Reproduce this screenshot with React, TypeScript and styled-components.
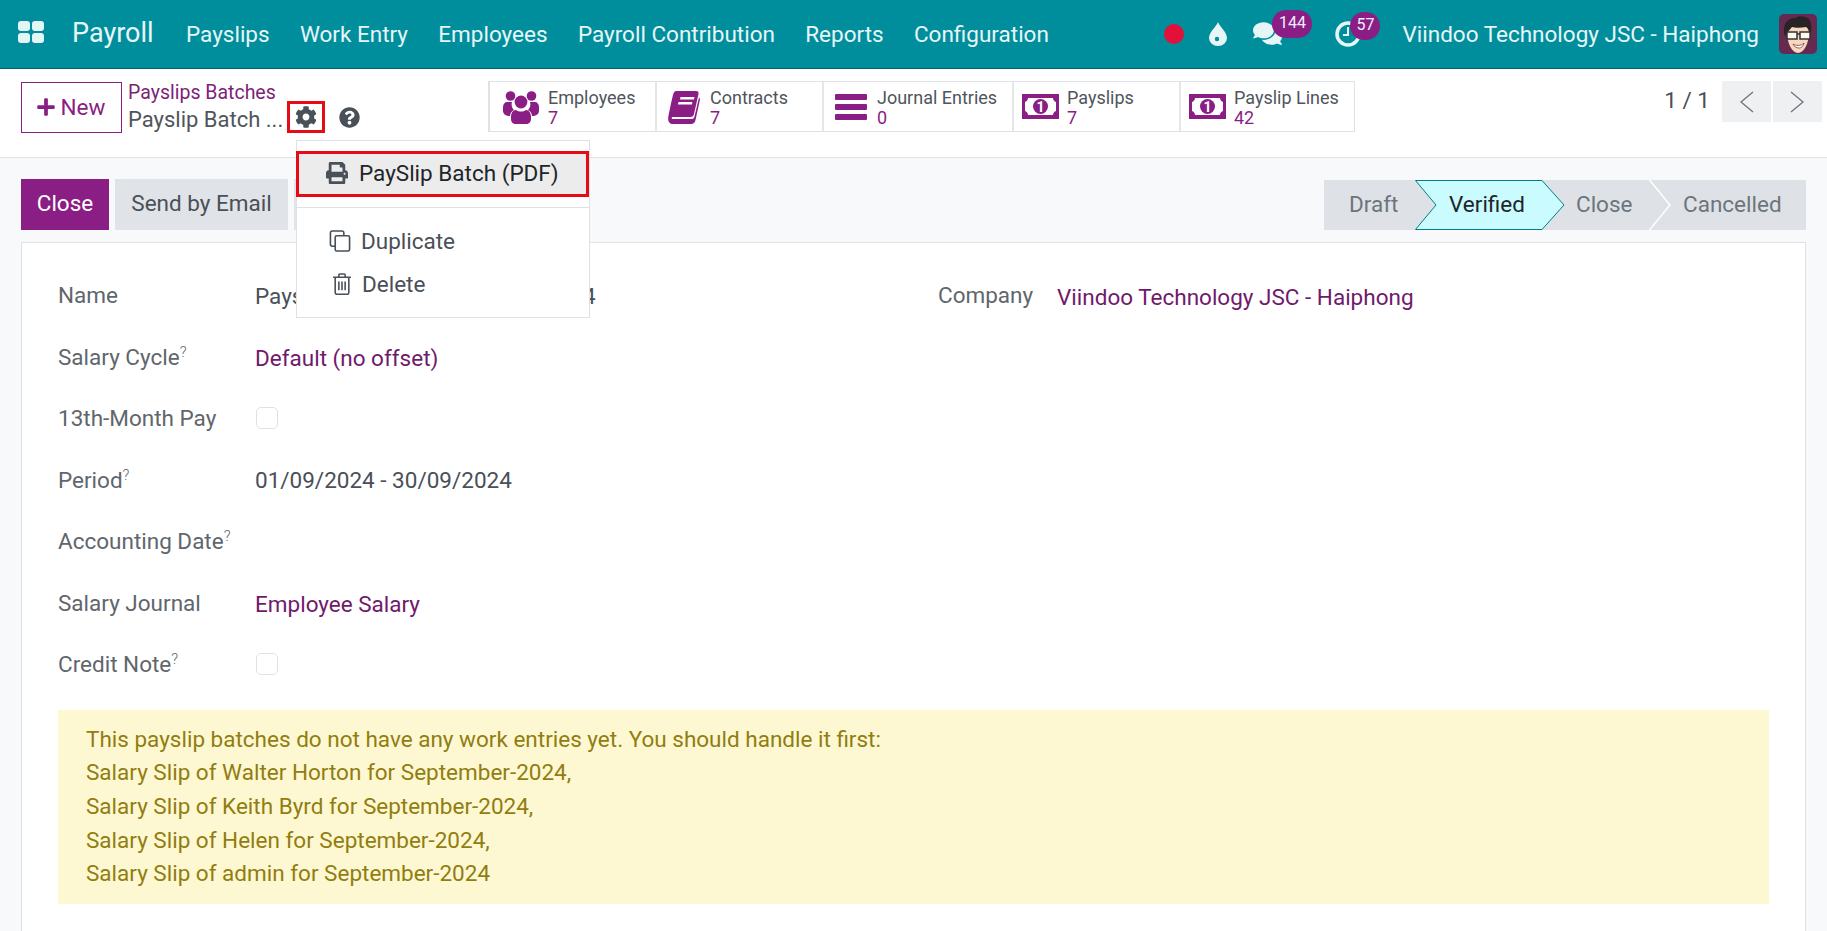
import React from "react";
import styled, { createGlobalStyle } from "styled-components";
import { FaCog, FaPlus, FaPrint, FaQuestionCircle, FaComments } from "react-icons/fa";

const GlobalStyle = createGlobalStyle`
  html, body {
    margin: 0;
    padding: 0;
    height: 100%;
    background: #f8f9fa;
    overflow: hidden;
  }
  body {
    font-family: Roboto, "Liberation Sans", sans-serif;
    font-size: 22.5px;
    color: #495057;
  }
`;

const purple = "#8a1e85";
const linkPurple = "#6f1a6b";

const Page = styled.div`
  width: 1827px;
  height: 931px;
  display: flex;
  flex-flow: column;
  overflow: hidden;
`;

/* top bar */
const NavBar = styled.header`
  height: 68px;
  flex: none;
  display: flex;
  align-items: center;
  background: #018e9c;
  border-bottom: 1px solid #05606a;
  color: #e6f6f7;
  padding: 0 10px 0 18px;
`;

const AppsGrid = styled.div`
  width: 26px;
  height: 21px;
  margin-top: -5px;
  display: grid;
  grid-template-columns: 12px 12px;
  grid-template-rows: 10px 10px;
  gap: 2px;
  span {
    background: #e4f5f6;
    border-radius: 3px;
  }
`;

const Brand = styled.div`
  font-size: 27px;
  margin-left: 28px;
  margin-right: 32px;
  margin-top: -2px;
  width: 82px;
`;

const NavMenu = styled.nav`
  display: flex;
  gap: 30.3px;
  margin-top: -1px;
`;

const NavRight = styled.div`
  margin-left: auto;
  display: flex;
  align-items: center;
  margin-top: -1px;
`;

const RecordDot = styled.span`
  width: 20px;
  height: 20px;
  border-radius: 50%;
  background: #e2113a;
  margin-right: 25px;
`;

const NavIcon = styled.span<{ $gap: number }>`
  position: relative;
  display: flex;
  margin-right: ${(p) => p.$gap}px;
`;

const Badge = styled.span<{ $left: number; $width: number }>`
  position: absolute;
  top: -9px;
  left: ${(p) => p.$left}px;
  width: ${(p) => p.$width}px;
  height: 28px;
  border-radius: 14px;
  background: ${purple};
  color: #eef;
  font-size: 16px;
  line-height: 25px;
  text-align: center;
`;

const CompanyName = styled.span`
  margin-right: 20px;
  white-space: nowrap;
`;

/* control panel */
const ControlPanel = styled.div`
  height: 89px;
  flex: none;
  box-sizing: border-box;
  display: flex;
  align-items: flex-start;
  background: #fff;
  border-bottom: 1px solid #dee2e6;
  padding: 12px 5px 0 21px;
`;

const PanelLeft = styled.div`
  width: 467px;
  flex: none;
  display: flex;
  gap: 6px;
`;

const NewButton = styled.button`
  width: 101px;
  height: 51px;
  margin-top: 1px;
  box-sizing: border-box;
  border: 1px solid ${purple};
  background: #fff;
  color: ${purple};
  font: inherit;
  display: flex;
  align-items: center;
  justify-content: center;
  gap: 5px;
  padding: 0 2px 2px 0;
  svg {
    width: 20px;
    height: 20px;
  }
`;

const Breadcrumbs = styled.div`
  display: flex;
  flex-flow: column;
`;

const CrumbLink = styled.a`
  color: #7d1f79;
  font-size: 19.5px;
  line-height: 22px;
  padding-top: 1px;
`;

const TitleRow = styled.div`
  height: 32px;
  margin-top: -3px;
  display: flex;
  align-items: center;
  color: #4f555b;
`;

const Title = styled.span`
  font-size: 22px;
  width: 159px;
  margin-top: 5px;
  white-space: nowrap;
`;

const GearCell = styled.div`
  position: relative;
  width: 38px;
  height: 32px;
  box-sizing: border-box;
  border: 3px solid #e60b14;
  display: flex;
  align-items: center;
  justify-content: center;
  svg {
    width: 22px;
    height: 22px;
    color: #495057;
  }
`;

const HelpIcon = styled(FaQuestionCircle)`
  width: 21px;
  height: 21px;
  margin-left: 14px;
  color: #495057;
`;

const ActionMenu = styled.div`
  position: absolute;
  z-index: 5;
  top: 36px;
  left: 6px;
  width: 294px;
  height: 178px;
  box-sizing: border-box;
  background: #fff;
  border: 1px solid #dee2e6;
  padding-top: 10px;
`;

const PrintItem = styled.div`
  height: 46px;
  margin: 0 0 0 -1px;
  box-sizing: border-box;
  border: 3px solid #e60b14;
  background: #ececec;
  color: #212529;
  display: flex;
  align-items: center;
  padding: 0 0 2px 27px;
  gap: 11px;
  white-space: nowrap;
  svg {
    width: 22px;
    height: 22px;
  }
`;

const MenuDivider = styled.hr`
  margin: 10px 0 11px;
  border: 0;
  border-top: 1px solid #dee2e6;
`;

const MenuItem = styled.div<{ $pad: number; $gap: number }>`
  height: 43px;
  display: flex;
  align-items: center;
  padding-left: ${(p) => p.$pad}px;
  gap: ${(p) => p.$gap}px;
  color: #495057;
`;

const StatButtons = styled.div`
  display: flex;
  height: 51px;
  box-sizing: border-box;
  border: 1px solid #dee2e6;
  border-left-width: 2px;
`;

const StatButton = styled.div<{ $width: number }>`
  width: ${(p) => p.$width}px;
  box-sizing: border-box;
  display: flex;
  align-items: center;
  border-right: 2px solid #e4e7ea;
  &:last-child {
    border-right: 0;
  }
`;

const StatIcon = styled.div<{ $width: number; $pad?: number }>`
  width: ${(p) => p.$width}px;
  box-sizing: border-box;
  padding-left: ${(p) => p.$pad || 0}px;
  flex: none;
  display: flex;
  justify-content: center;
  color: ${purple};
`;

const StatText = styled.div`
  display: flex;
  flex-flow: column;
  font-size: 18px;
  line-height: 20px;
  padding-top: 2px;
  color: #4f555b;
  white-space: nowrap;
  b {
    font-weight: 400;
    color: ${purple};
  }
`;

const Pager = styled.div`
  margin-left: auto;
  display: flex;
  align-items: flex-start;
  gap: 2px;
`;

const PagerCount = styled.span`
  line-height: 38px;
  margin-right: 10px;
`;

const PagerButton = styled.button`
  width: 49px;
  height: 41px;
  border: 0;
  padding: 0;
  background: #eff0f2;
  color: #6c757d;
  display: flex;
  align-items: center;
  justify-content: center;
`;

/* content */
const Content = styled.main`
  flex: 1;
  padding: 21px 21px 0;
  min-height: 0;
  display: flex;
  flex-flow: column;
`;

const StatusRow = styled.div`
  height: 51px;
  flex: none;
  display: flex;
  justify-content: space-between;
  margin-bottom: 12px;
`;

const Actions = styled.div`
  display: flex;
  gap: 6px;
`;

const ActionButton = styled.button<{ $primary?: boolean; $width: number }>`
  width: ${(p) => p.$width}px;
  border: 0;
  padding: 0 0 4px;
  font: inherit;
  background: ${(p) => (p.$primary ? purple : "#e0e3e8")};
  color: ${(p) => (p.$primary ? "#fff" : "#495057")};
`;

const StatusBar = styled.div`
  display: flex;
  height: 50px;
  margin-top: 1px;
  background: #dee2e6;
`;

const Stage = styled.div<{ $width: number; $pad: number; $active?: boolean }>`
  position: relative;
  width: ${(p) => p.$width}px;
  padding-left: ${(p) => p.$pad}px;
  box-sizing: border-box;
  line-height: 48px;
  white-space: nowrap;
  color: ${(p) => (p.$active ? "#212529" : "#6c757d")};
  svg {
    position: absolute;
    top: 0;
    left: 0;
  }
  span {
    position: relative;
  }
`;

const Sheet = styled.section`
  flex: 1;
  background: #fff;
  border: 1px solid #dee2e6;
  border-bottom: 0;
  padding: 21.5px 36px 0 36px;
`;

const FormGrid = styled.div`
  display: grid;
  grid-template-columns: 880px 1fr;
  margin-bottom: 14.5px;
`;

const FormColumn = styled.div`
  display: flex;
  flex-flow: column;
`;

const FormRow = styled.div<{ $labelWidth: number }>`
  height: 61.5px;
  display: grid;
  grid-template-columns: ${(p) => p.$labelWidth}px 1fr;
  align-items: center;
  white-space: nowrap;
`;

const Label = styled.label`
  color: #60666c;
  sup {
    font-size: 15px;
    font-weight: 300;
    line-height: 0;
  }
`;

const Value = styled.span<{ $link?: boolean }>`
  color: ${(p) => (p.$link ? linkPurple : "#495057")};
  padding-top: ${(p) => (p.$link ? 3 : 1)}px;
`;

const CheckBox = styled.span`
  display: block;
  width: 22px;
  height: 22px;
  margin-left: 1px;
  box-sizing: border-box;
  border: 1px solid #dee2e6;
  border-radius: 5px;
  background: #fff;
`;

const WarningBox = styled.div`
  background: #fdf8d2;
  color: #917d10;
  line-height: 33.7px;
  padding: 13px 28px 13px;
`;

const Users = () => (
  <svg width="38" height="34" viewBox="0 0 36 34" fill="currentColor">
    <circle cx="7.5" cy="6" r="4.8" />
    <circle cx="28.5" cy="6" r="4.8" />
    <path d="M0 17c0-3 2-5 4-5h5c-1 3 0 6 2 8-2 1-4 3-4 6-4 0-7-2-7-5z" />
    <path d="M36 17c0-3-2-5-4-5h-5c1 3 0 6-2 8 2 1 4 3 4 6 4 0 7-2 7-5z" />
    <circle cx="18" cy="12" r="6.4" />
    <path d="M13 20c3 2 7 2 10 0 3 0 5 3 5 7v2c0 3-2 5-5 5H13c-3 0-5-2-5-5v-2c0-4 2-7 5-7z" />
  </svg>
);

const Book = () => (
  <svg width="32" height="34" viewBox="0 0 32 34" fill="currentColor">
    <path d="M8 1h20c2 0 3 1 2.500 3L26 24c-.5 2-1.500 3-4 3H5c-1.500 0-2 2 0 2h19c1.500 0 2-1 2.500-2.500L31 7.500c1 .5 1 1.500.8 3L27.500 30c-.5 2.500-2 4-4.500 4H5c-3 0-5-2-4.800-5.500C.3 26 5 4 5.500 3.500 6 2 7 1 8 1z" />
    <rect x="11" y="7" width="14" height="2.500" rx=".5" fill="#fff" transform="skewX(-12) translate(3 0)" />
    <rect x="10" y="12" width="14" height="2.500" rx=".5" fill="#fff" transform="skewX(-12) translate(3 0)" />
  </svg>
);

const Bars = () => (
  <svg width="32" height="26" viewBox="0 0 32 26" fill="currentColor">
    <rect x="0" y="0" width="32" height="6" rx="1" />
    <rect x="0" y="10" width="32" height="6" rx="1" />
    <rect x="0" y="20" width="32" height="6" rx="1" />
  </svg>
);

const Money = () => (
  <svg width="37" height="25" viewBox="0 0 37 25" fill="currentColor">
    <path
      fillRule="evenodd"
      d="M0 0h37v25H0zM6 4c0 2-1.500 3.500-3 4v9c1.500.5 3 2 3 4h25c0-2 1.500-3.500 3-4V8c-1.500-.5-3-2-3-4z"
    />
    <circle cx="18.500" cy="12.500" r="7.500" />
    <text x="18.500" y="17.500" fontSize="14" fontWeight="700" textAnchor="middle" fill="#fff" fontFamily="Roboto, sans-serif">
      1
    </text>
  </svg>
);

const Drop = () => (
  <svg width="18" height="24" viewBox="0 0 18 24">
    <path d="M9 0c1 4 9 10 9 16a9 8 0 0 1-18 0C0 10 8 4 9 0z" fill="#e6f6f7" />
    <circle cx="8" cy="17" r="2.200" fill="#018e9c" />
  </svg>
);

const ClockRing = () => (
  <svg width="26" height="26" viewBox="0 0 26 26" fill="none" stroke="#e6f6f7">
    <circle cx="13" cy="13" r="11" strokeWidth="3.500" />
    <path d="M13 6v8h-5" strokeWidth="2" />
  </svg>
);

const CopyIcon = () => (
  <svg width="23" height="24" viewBox="0 0 22 23" fill="none" stroke="#495057" strokeWidth="1.700">
    <rect x="6" y="6" width="15" height="16" rx="1.500" />
    <path d="M6 17H3c-1 0-2-1-2-2V3c0-1 1-2 2-2h10c1 0 2 1 2 2v3" />
  </svg>
);

const TrashIcon = () => (
  <svg width="17" height="21" viewBox="0 0 17 21" fill="none" stroke="#495057" strokeWidth="1.500">
    <path d="M0 4h17M5.500 4V2c0-.6.5-1 1-1h4c.5 0 1 .4 1 1v2M2 4v14.500c0 1 .6 1.800 1.500 1.800h10c.9 0 1.500-.8 1.500-1.800V4" />
    <path d="M5.500 8v8.500M8.500 8v8.500M11.500 8v8.500" />
  </svg>
);

const Chevron = ({ left }: { left?: boolean }) => (
  <svg width="15" height="22" viewBox="0 0 15 22" fill="none" stroke="currentColor" strokeWidth="1.300">
    <path d={left ? "M14 1 2 11l12 10" : "M1 1l12 10L1 21"} />
  </svg>
);

const Avatar = () => (
  <svg width="38" height="40" viewBox="0 0 38 40">
    <rect width="38" height="40" rx="5" fill="#66294f" />
    <path d="M8 18c0-9 4-13 11-13s11 5 11 13c0 11-5 21-11 21S8 29 8 18z" fill="#f6d8c0" />
    <path d="M6 22C2 10 10 3 16 4c4-3 11-2 14 1 3 4 3 11 1 16-1-4-2-7-4-8-5 1-11 1-14 0-2 2-4 5-7 9z" fill="#2b2226" />
    <rect x="8" y="18" width="10" height="7" fill="#fff7ee" stroke="#333" strokeWidth="1.500" />
    <rect x="21" y="18" width="10" height="7" fill="#fff7ee" stroke="#333" strokeWidth="1.500" />
    <path d="M18 20h3" stroke="#333" strokeWidth="1.500" />
    <path d="M14 30c3 2 8 2 11-1-1 4-3 5-5 5s-5-1-6-4z" fill="#fff" stroke="#7a3b30" strokeWidth=".8" />
  </svg>
);

const App = () => {
  return (
    <Page>
      <GlobalStyle />
      <NavBar>
        <AppsGrid>
          <span />
          <span />
          <span />
          <span />
        </AppsGrid>
        <Brand>Payroll</Brand>
        <NavMenu>
          {["Payslips", "Work Entry", "Employees", "Payroll Contribution", "Reports", "Configuration"].map((item) => (
            <span key={item}>{item}</span>
          ))}
        </NavMenu>
        <NavRight>
          <RecordDot />
          <NavIcon $gap={26}>
            <Drop />
          </NavIcon>
          <NavIcon $gap={53}>
            <FaComments size={29} />
            <Badge $left={19} $width={40}>
              144
            </Badge>
          </NavIcon>
          <NavIcon $gap={41}>
            <ClockRing />
            <Badge $left={15} $width={30}>
              57
            </Badge>
          </NavIcon>
          <CompanyName>Viindoo Technology JSC - Haiphong</CompanyName>
          <Avatar />
        </NavRight>
      </NavBar>

      <ControlPanel>
        <PanelLeft>
          <NewButton>
            <FaPlus />
            New
          </NewButton>
          <Breadcrumbs>
            <CrumbLink>Payslips Batches</CrumbLink>
            <TitleRow>
              <Title>Payslip Batch ...</Title>
              <GearCell>
                <FaCog />
                <ActionMenu>
                  <PrintItem>
                    <FaPrint />
                    PaySlip Batch (PDF)
                  </PrintItem>
                  <MenuDivider />
                  <MenuItem $pad={32} $gap={10}>
                    <CopyIcon />
                    Duplicate
                  </MenuItem>
                  <MenuItem $pad={34} $gap={9}>
                    <TrashIcon />
                    Delete
                  </MenuItem>
                </ActionMenu>
              </GearCell>
              <HelpIcon />
            </TitleRow>
          </Breadcrumbs>
        </PanelLeft>
        <StatButtons>
          <StatButton $width={167}>
            <StatIcon $width={58} $pad={4}>
              <Users />
            </StatIcon>
            <StatText>
              Employees
              <b>7</b>
            </StatText>
          </StatButton>
          <StatButton $width={167}>
            <StatIcon $width={53}>
              <Book />
            </StatIcon>
            <StatText>
              Contracts
              <b>7</b>
            </StatText>
          </StatButton>
          <StatButton $width={190}>
            <StatIcon $width={53}>
              <Bars />
            </StatIcon>
            <StatText>
              Journal Entries
              <b>0</b>
            </StatText>
          </StatButton>
          <StatButton $width={167}>
            <StatIcon $width={53}>
              <Money />
            </StatIcon>
            <StatText>
              Payslips
              <b>7</b>
            </StatText>
          </StatButton>
          <StatButton $width={173}>
            <StatIcon $width={53}>
              <Money />
            </StatIcon>
            <StatText>
              Payslip Lines
              <b>42</b>
            </StatText>
          </StatButton>
        </StatButtons>
        <Pager>
          <PagerCount>1 / 1</PagerCount>
          <PagerButton>
            <Chevron left />
          </PagerButton>
          <PagerButton>
            <Chevron />
          </PagerButton>
        </Pager>
      </ControlPanel>

      <Content>
        <StatusRow>
          <Actions>
            <ActionButton $primary $width={88}>
              Close
            </ActionButton>
            <ActionButton $width={173}>Send by Email</ActionButton>
            <ActionButton $width={120} />
          </Actions>
          <StatusBar>
            <Stage $width={91} $pad={25}>
              Draft
            </Stage>
            <Stage $width={149} $pad={34} $active>
              <svg width="150" height="50" viewBox="0 0 150 50">
                <path d="M.5.500H127L149 25 127 49.500H.5L21 25z" fill="#c9fbff" stroke="#017e84" />
              </svg>
              <span>Verified</span>
            </Stage>
            <Stage $width={85} $pad={12}>
              Close
            </Stage>
            <Stage $width={157} $pad={34}>
              <svg width="24" height="50" viewBox="0 0 24 50">
                <path d="M.5 0 21 25 .5 50" fill="none" stroke="#fff" strokeWidth="1.500" />
              </svg>
              <span>Cancelled</span>
            </Stage>
          </StatusBar>
        </StatusRow>

        <Sheet>
          <FormGrid>
            <FormColumn>
              <FormRow $labelWidth={197}>
                <Label>Name</Label>
                <Value>Payslip Batch for September-2024</Value>
              </FormRow>
              <FormRow $labelWidth={197}>
                <Label>
                  Salary Cycle<sup>?</sup>
                </Label>
                <Value $link>Default (no offset)</Value>
              </FormRow>
              <FormRow $labelWidth={197}>
                <Label>13th-Month Pay</Label>
                <CheckBox />
              </FormRow>
              <FormRow $labelWidth={197}>
                <Label>
                  Period<sup>?</sup>
                </Label>
                <Value>01/09/2024 - 30/09/2024</Value>
              </FormRow>
              <FormRow $labelWidth={197}>
                <Label>
                  Accounting Date<sup>?</sup>
                </Label>
                <span />
              </FormRow>
              <FormRow $labelWidth={197}>
                <Label>Salary Journal</Label>
                <Value $link>Employee Salary</Value>
              </FormRow>
              <FormRow $labelWidth={197}>
                <Label>
                  Credit Note<sup>?</sup>
                </Label>
                <CheckBox />
              </FormRow>
            </FormColumn>
            <FormColumn>
              <FormRow $labelWidth={119}>
                <Label>Company</Label>
                <Value $link>Viindoo Technology JSC - Haiphong</Value>
              </FormRow>
            </FormColumn>
          </FormGrid>
          <WarningBox>
            This payslip batches do not have any work entries yet. You should handle it first:
            <br />
            Salary Slip of Walter Horton for September-2024,
            <br />
            Salary Slip of Keith Byrd for September-2024,
            <br />
            Salary Slip of Helen for September-2024,
            <br />
            Salary Slip of admin for September-2024
          </WarningBox>
        </Sheet>
      </Content>
    </Page>
  );
};

export default App;
